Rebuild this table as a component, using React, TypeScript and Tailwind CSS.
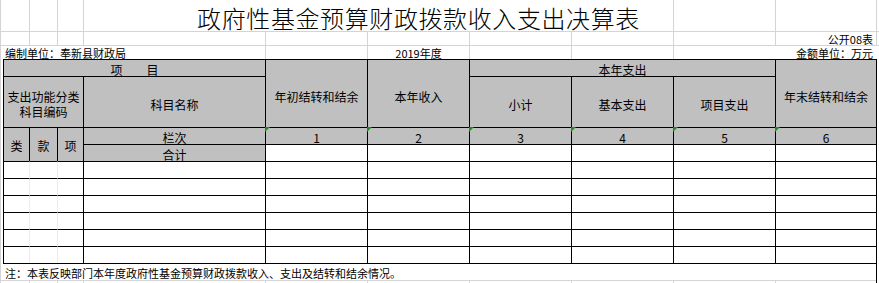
import React from "react";

const G = "border-l border-t border-[#d4d4d4]";
const GL = "border-l border-[#d4d4d4]";
const H = "border-l border-t border-black bg-[#c0c0c0]";
const W = "border-l border-t border-black bg-white";

function Tri() {
  return (
    <span className="absolute left-[-1px] top-[-1px] w-[5px] h-[5px] bg-[#1e8e1e] [clip-path:polygon(0_0,100%_0,0_100%)]" />
  );
}

const dataRows = [
  "row-start-8 row-end-9",
  "row-start-9 row-end-10",
  "row-start-10 row-end-11",
  "row-start-11 row-end-12",
  "row-start-12 row-end-13",
  "row-start-13 row-end-14",
];

const numCols = [
  "col-start-6 col-end-7",
  "col-start-7 col-end-8",
  "col-start-8 col-end-9",
  "col-start-9 col-end-10",
  "col-start-10 col-end-11",
  "col-start-11 col-end-12",
];

export default function App() {
  return (
    <div className="w-[879px] h-[283px] bg-white text-black font-['Noto_Sans_CJK_SC',sans-serif] grid grid-cols-[3px_26px_28px_26px_182px_102px_102px_102px_102px_102px_101px_3px] grid-rows-[31px_14px_14px_17px_51px_17px_17px_17px_17px_17px_17px_17px_17px_17px_3px] overflow-hidden">
      {/* Row 1: title */}
      <div className={`col-start-1 col-end-3 row-start-1 row-end-2 ${GL}`} />
      <div className={`col-start-3 col-end-4 row-start-1 row-end-2 ${GL}`} />
      <div className={`col-start-4 col-end-5 row-start-1 row-end-2 ${GL}`} />
      <div className={`col-start-5 col-end-10 row-start-1 row-end-2 ${GL} flex items-center justify-center pl-[80px] pt-[5px] text-[24px] leading-[24px] font-light tracking-[0.6px] whitespace-nowrap`}>
        政府性基金预算财政拨款收入支出决算表
      </div>
      <div className={`col-start-10 col-end-11 row-start-1 row-end-2 ${GL}`} />
      <div className={`col-start-11 col-end-12 row-start-1 row-end-2 ${GL}`} />
      <div className={`col-start-12 col-end-13 row-start-1 row-end-2 ${GL}`} />

      {/* Row 2 */}
      <div className={`col-start-1 col-end-3 row-start-2 row-end-3 ${G}`} />
      <div className={`col-start-3 col-end-4 row-start-2 row-end-3 ${G}`} />
      <div className={`col-start-4 col-end-5 row-start-2 row-end-3 ${G}`} />
      <div className={`col-start-5 col-end-6 row-start-2 row-end-3 ${G}`} />
      <div className={`col-start-6 col-end-7 row-start-2 row-end-3 ${G}`} />
      <div className={`col-start-7 col-end-8 row-start-2 row-end-3 ${G}`} />
      <div className={`col-start-8 col-end-9 row-start-2 row-end-3 ${G}`} />
      <div className={`col-start-9 col-end-10 row-start-2 row-end-3 ${G}`} />
      <div className={`col-start-10 col-end-11 row-start-2 row-end-3 ${G}`} />
      <div className={`col-start-11 col-end-12 row-start-2 row-end-3 ${G} flex items-end justify-end pr-[3px] text-[11px] leading-[11px] whitespace-nowrap`}>
        公开08表
      </div>
      <div className={`col-start-12 col-end-13 row-start-2 row-end-3 ${G}`} />

      {/* Row 3 */}
      <div className={`col-start-1 col-end-6 row-start-3 row-end-4 ${G} flex items-end pl-[4px] text-[11px] leading-[11px] whitespace-nowrap`}>
        编制单位：奉新县财政局
      </div>
      <div className={`col-start-6 col-end-7 row-start-3 row-end-4 ${G}`} />
      <div className={`col-start-7 col-end-8 row-start-3 row-end-4 ${G} flex items-end justify-center text-[11px] leading-[11px] whitespace-nowrap`}>
        2019年度
      </div>
      <div className={`col-start-8 col-end-9 row-start-3 row-end-4 ${G}`} />
      <div className={`col-start-9 col-end-10 row-start-3 row-end-4 ${G}`} />
      <div className={`col-start-10 col-end-13 row-start-3 row-end-4 ${G} flex items-end justify-end pr-[6px] text-[11px] leading-[11px] whitespace-nowrap`}>
        金额单位：万元
      </div>

      {/* Left gutter and right edge in table rows */}
      <div className={`col-start-1 col-end-2 row-start-4 row-end-15 ${GL}`} />
      <div className="col-start-12 col-end-13 row-start-4 row-end-16 border-l border-black" />

      {/* Header rows */}
      <div className={`col-start-2 col-end-6 row-start-4 row-end-5 ${H} flex items-end justify-center gap-[24px] text-[12px] leading-[12px]`}>
        <span>项</span>
        <span>目</span>
      </div>
      <div className={`col-start-2 col-end-5 row-start-5 row-end-6 ${H} flex flex-col items-center justify-center gap-[3px] pt-[4px] text-[12px] leading-[12px]`}>
        <span>支出功能分类</span>
        <span>科目编码</span>
      </div>
      <div className={`col-start-5 col-end-6 row-start-5 row-end-6 ${H} flex items-center justify-center pt-[5px] text-[12px] leading-[12px]`}>
        科目名称
      </div>
      <div className={`col-start-6 col-end-7 row-start-4 row-end-6 ${H} flex items-center justify-center pt-[6px] text-[12px] leading-[12px]`}>
        年初结转和结余
      </div>
      <div className={`col-start-7 col-end-8 row-start-4 row-end-6 ${H} flex items-center justify-center pt-[6px] text-[12px] leading-[12px]`}>
        本年收入
      </div>
      <div className={`col-start-8 col-end-11 row-start-4 row-end-5 ${H} flex items-end justify-center text-[12px] leading-[12px]`}>
        本年支出
      </div>
      <div className={`col-start-8 col-end-9 row-start-5 row-end-6 ${H} flex items-center justify-center pt-[5px] text-[12px] leading-[12px]`}>
        小计
      </div>
      <div className={`col-start-9 col-end-10 row-start-5 row-end-6 ${H} flex items-center justify-center pt-[5px] text-[12px] leading-[12px]`}>
        基本支出
      </div>
      <div className={`col-start-10 col-end-11 row-start-5 row-end-6 ${H} flex items-center justify-center pt-[5px] text-[12px] leading-[12px]`}>
        项目支出
      </div>
      <div className={`col-start-11 col-end-12 row-start-4 row-end-6 ${H} flex items-center justify-center pt-[6px] text-[12px] leading-[12px]`}>
        年末结转和结余
      </div>

      {/* 类 款 项 */}
      <div className={`col-start-2 col-end-3 row-start-6 row-end-8 ${H} flex items-center justify-center pt-[3px] text-[12px] leading-[12px]`}>
        类
      </div>
      <div className={`col-start-3 col-end-4 row-start-6 row-end-8 ${H} flex items-center justify-center pt-[3px] text-[12px] leading-[12px]`}>
        款
      </div>
      <div className={`col-start-4 col-end-5 row-start-6 row-end-8 ${H} flex items-center justify-center pt-[3px] text-[12px] leading-[12px]`}>
        项
      </div>
      <div className={`col-start-5 col-end-6 row-start-6 row-end-7 ${H} flex items-end justify-center text-[12px] leading-[12px]`}>
        栏次
      </div>
      <div className={`col-start-5 col-end-6 row-start-7 row-end-8 ${H} flex items-end justify-center text-[12px] leading-[12px]`}>
        合计
      </div>
      {numCols.map((c, i) => (
        <div key={c} className={`${c} row-start-6 row-end-7 ${H} relative flex items-end justify-center text-[12px] leading-[12px]`}>
          <Tri />
          {i + 1}
        </div>
      ))}
      {numCols.map((c) => (
        <div key={"t" + c} className={`${c} row-start-7 row-end-8 ${W}`} />
      ))}

      {/* Data rows */}
      {dataRows.map((r) => (
        <React.Fragment key={r}>
          <div className={`col-start-2 col-end-3 ${r} border-l border-t border-black`} />
          <div className={`col-start-3 col-end-4 ${r} border-l border-t border-t-black border-l-[#ececec]`} />
          <div className={`col-start-4 col-end-5 ${r} border-l border-t border-t-black border-l-[#ececec]`} />
          <div className={`col-start-5 col-end-6 ${r} ${W}`} />
          {numCols.map((c) => (
            <div key={c} className={`${c} ${r} ${W}`} />
          ))}
        </React.Fragment>
      ))}

      {/* Note row */}
      <div className="col-start-2 col-end-12 row-start-14 row-end-15 border-t border-black flex items-end pl-[2px] pb-[1px] text-[11px] leading-[11px] whitespace-nowrap">
        注：本表反映部门本年度政府性基金预算财政拨款收入、支出及结转和结余情况。
      </div>

      {/* Bottom strip */}
      <div className={`col-start-1 col-end-3 row-start-15 row-end-16 ${G}`} />
      <div className={`col-start-3 col-end-4 row-start-15 row-end-16 ${G}`} />
      <div className={`col-start-4 col-end-5 row-start-15 row-end-16 ${G}`} />
      <div className={`col-start-5 col-end-6 row-start-15 row-end-16 ${G}`} />
      <div className={`col-start-6 col-end-7 row-start-15 row-end-16 ${G}`} />
      <div className={`col-start-7 col-end-8 row-start-15 row-end-16 ${G}`} />
      <div className={`col-start-8 col-end-9 row-start-15 row-end-16 ${G}`} />
      <div className={`col-start-9 col-end-10 row-start-15 row-end-16 ${G}`} />
      <div className={`col-start-10 col-end-11 row-start-15 row-end-16 ${G}`} />
      <div className={`col-start-11 col-end-12 row-start-15 row-end-16 ${G}`} />
    </div>
  );
}
